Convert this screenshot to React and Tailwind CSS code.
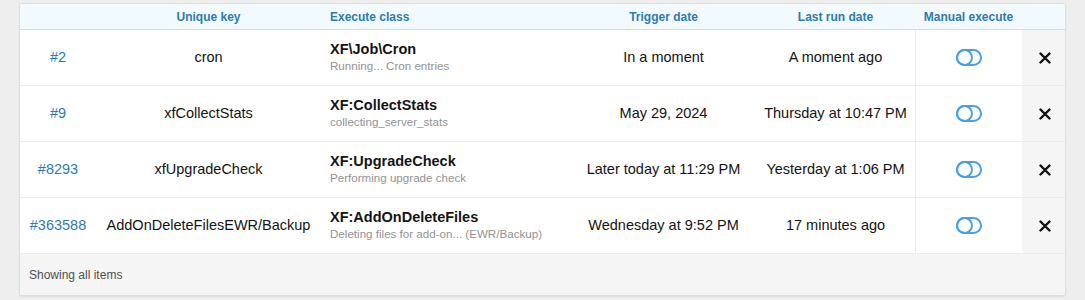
import React from 'react';

const rows = [
  { id: '#2', key: 'cron', cls: 'XF\\Job\\Cron', desc: 'Running... Cron entries', trigger: 'In a moment', last: 'A moment ago' },
  { id: '#9', key: 'xfCollectStats', cls: 'XF:CollectStats', desc: 'collecting_server_stats', trigger: 'May 29, 2024', last: 'Thursday at 10:47 PM' },
  { id: '#8293', key: 'xfUpgradeCheck', cls: 'XF:UpgradeCheck', desc: 'Performing upgrade check', trigger: 'Later today at 11:29 PM', last: 'Yesterday at 1:06 PM' },
  { id: '#363588', key: 'AddOnDeleteFilesEWR/Backup', cls: 'XF:AddOnDeleteFiles', desc: 'Deleting files for add-on... (EWR/Backup)', trigger: 'Wednesday at 9:52 PM', last: '17 minutes ago' },
];

const cols = 'grid grid-cols-[76px_225px_250px_185px_159px_107px_45px]';

const ToggleIcon = () => (
  <svg width="26" height="17" viewBox="0 0 26 17" fill="none" stroke="#4aa0e2" strokeWidth="2">
    <rect x="1" y="1" width="24" height="15" rx="7.5" />
    <circle cx="8.5" cy="8.5" r="7.5" />
  </svg>
);

const CloseIcon = () => (
  <svg width="12" height="12" viewBox="0 0 12 12" stroke="#111" strokeWidth="2.4" strokeLinecap="round">
    <path d="M1.5 1.5 L10.5 10.5 M10.5 1.5 L1.5 10.5" />
  </svg>
);

const App = () => {
  return (
    <div className="w-[1085px] h-[300px] bg-[#eeeeee] pt-[3px] pl-[19px] font-['Liberation_Sans',Arial,sans-serif]">
      <div className="w-[1047px] bg-white border border-[#dedede] rounded-[3px] shadow-[0_1px_2px_rgba(0,0,0,0.06)] overflow-hidden">
        <div className={`${cols} h-[26px] bg-[#f3fafd] border-b border-[#d5dde2] text-[12px] font-bold text-[#2b7bb5] items-center`}>
          <div />
          <div className="text-center">Unique key</div>
          <div className="pl-[9px]">Execute class</div>
          <div className="text-center">Trigger date</div>
          <div className="text-center">Last run date</div>
          <div className="text-center">Manual execute</div>
          <div />
        </div>
        {rows.map((r) => (
          <div key={r.id} className={`${cols} h-[56px] border-b border-[#ececec] text-[14.5px] text-[#141414]`}>
            <div className="flex items-center justify-center text-[#2b7bb5]">{r.id}</div>
            <div className="flex items-center justify-center">{r.key}</div>
            <div className="flex flex-col justify-center pl-[9px]">
              <div className="font-bold leading-[17px]">{r.cls}</div>
              <div className="text-[11.6px] text-[#939393] leading-[16px]">{r.desc}</div>
            </div>
            <div className="flex items-center justify-center">{r.trigger}</div>
            <div className="flex items-center justify-center">{r.last}</div>
            <div className="flex items-center justify-center border-l border-[#ececec]">
              <ToggleIcon />
            </div>
            <div className="flex items-center justify-center bg-[#f5f5f5]">
              <CloseIcon />
            </div>
          </div>
        ))}
        <div className="h-[41px] bg-[#f5f5f5] flex items-center pl-[9px] text-[12px] text-[#505050]">
          Showing all items
        </div>
      </div>
    </div>
  );
};

export default App;
